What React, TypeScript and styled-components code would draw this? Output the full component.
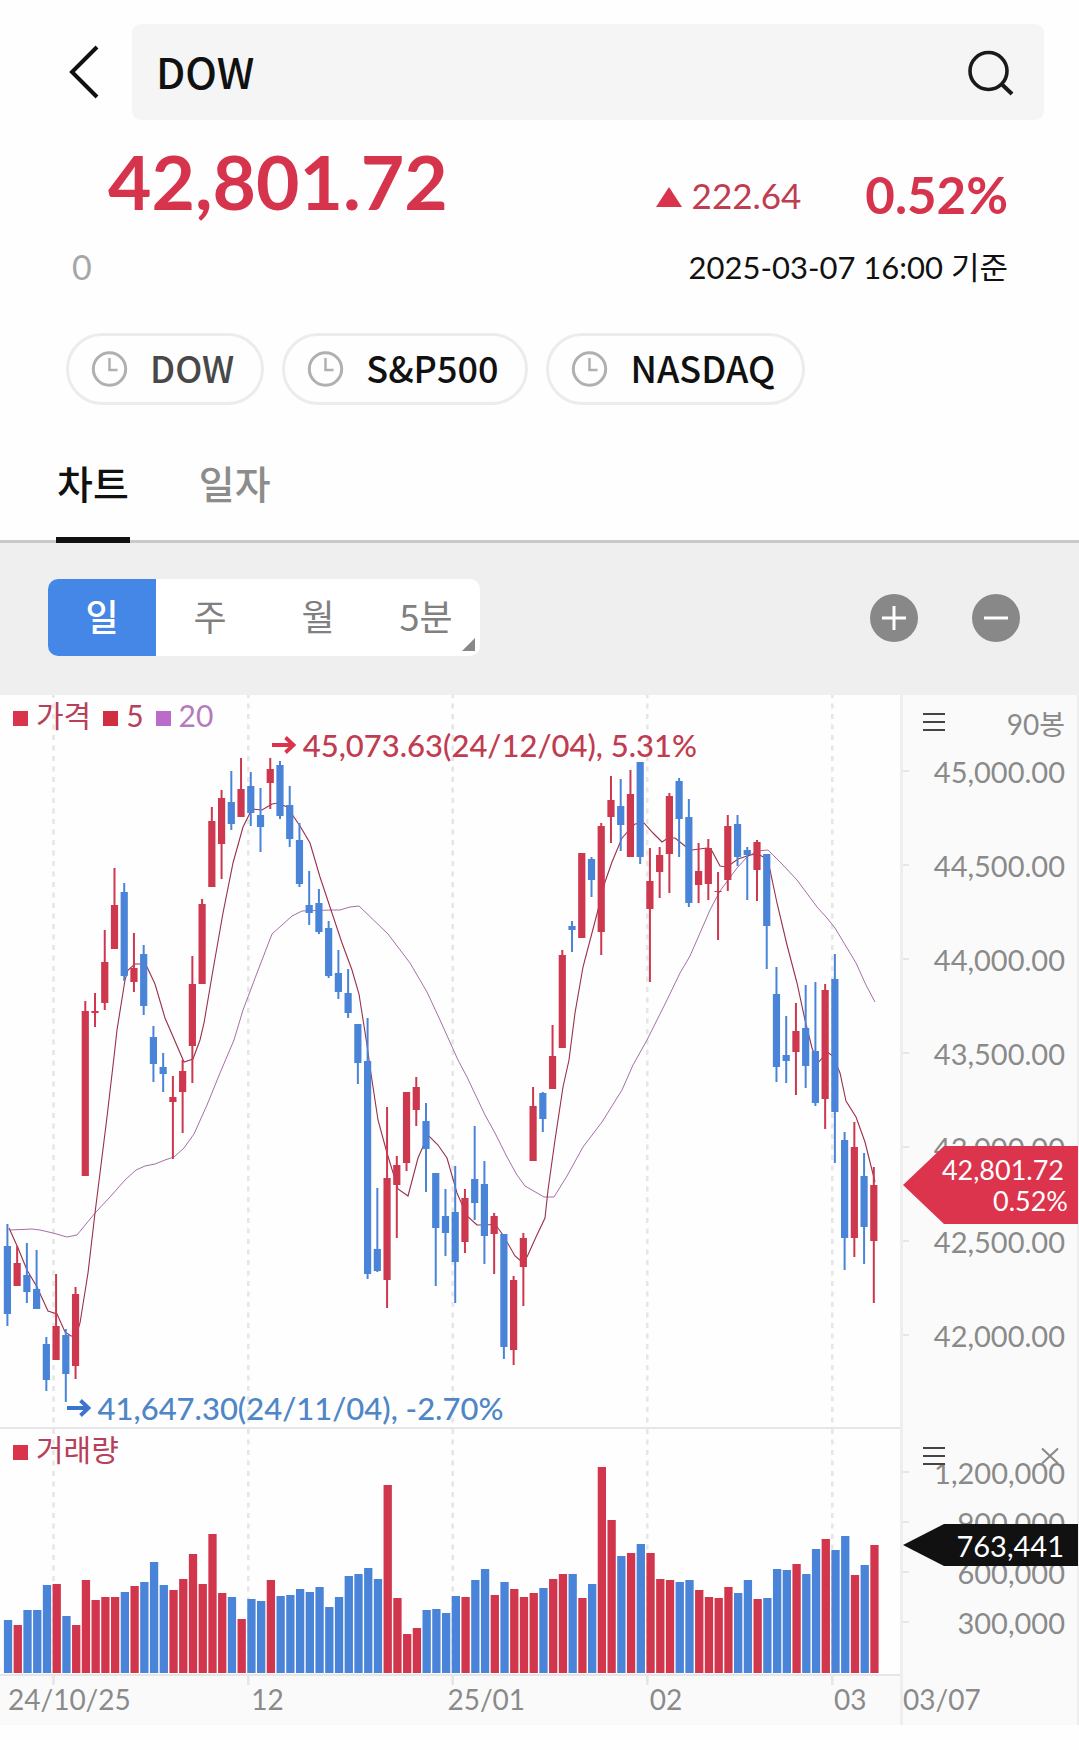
import React, { useState } from "react";
import styled, { createGlobalStyle } from "styled-components";

const RED = "#d6344d";
const BLUE = "#4a84d8";
const NUM = `Lato, "Noto Sans CJK KR", sans-serif`;
const KR = `"Noto Sans CJK KR", "Noto Sans", sans-serif`;

const GlobalStyle = createGlobalStyle`
  *, *::before, *::after { box-sizing: border-box; }
  body { margin: 0; background: #fefefe; color: #111; font-family: ${KR}; }
  button, input { font: inherit; color: inherit; border: 0; padding: 0; margin: 0; background: none; }
  button { cursor: pointer; }
  svg { display: block; }
`;

const Page = styled.main`
  padding-top: 24px;
  padding-bottom: 25px;
`;

const Header = styled.header`
  display: flex;
  align-items: center;
  padding: 0 35px 0 56px;
`;

const BackButton = styled.button`
  width: 56px;
  height: 96px;
  margin-right: 20px;
  display: grid;
  place-items: center;
`;

const SearchBox = styled.label`
  flex: 1;
  display: flex;
  align-items: center;
  height: 96px;
  padding: 0 28px 0 24px;
  border-radius: 9px;
  background: #f5f5f5;
`;

const SearchInput = styled.input`
  flex: 1;
  min-width: 0;
  height: 68px;
  padding-bottom: 4px;
  font-size: 42px;
  font-weight: 500;
  line-height: 64px;
  outline: none;
`;

const SearchButton = styled.button`
  width: 52px;
  height: 52px;
`;

const Quote = styled.section`
  padding: 17px 71px 0 72px;
  font-family: ${NUM};
`;

const QuoteRow = styled.div`
  display: flex;
  justify-content: space-between;
  color: ${RED};
`;

const Price = styled.strong`
  margin-left: 36px;
  font-size: 75px;
  line-height: 88px;
  font-weight: 700;
`;

const Change = styled.div`
  display: flex;
  align-items: center;
  align-self: flex-end;
  line-height: 60px;
`;

const Up = styled.svg`
  margin: 4px 10px 0 0;
`;

const Diff = styled.span`
  font-size: 35px;
  color: #c03c50;
`;

const Rate = styled.strong`
  margin-left: 64px;
  font-size: 51px;
  font-weight: 700;
`;

const StampRow = styled.div`
  display: flex;
  justify-content: space-between;
  margin-top: 22px;
  line-height: 40px;
`;

const Total = styled.span`
  font-size: 34px;
  color: #a6a6a6;
`;

const Stamp = styled.time`
  font-size: 31px;
`;

const Chips = styled.nav`
  display: flex;
  gap: 18px;
  margin-top: 46px;
  padding: 0 66px;
`;

const Chip = styled.button<{ $muted?: boolean }>`
  display: flex;
  align-items: center;
  gap: 22px;
  height: 72px;
  padding: 0 27px 0 22px;
  border: 3px solid #ececec;
  border-radius: 36px;
  font-size: 36px;
  font-weight: 500;
  white-space: nowrap;
  color: ${(p) => (p.$muted ? "#484848" : "#111")};
`;

const ChipName = styled.span`
  padding-bottom: 5px;
`;

const Tabs = styled.div`
  display: flex;
  gap: 68px;
  margin-top: 20px;
  padding: 0 56px;
  box-shadow: inset 0 -3px #c9c9c9;
`;

const Tab = styled.button<{ $on: boolean }>`
  height: 118px;
  font-size: 39px;
  font-weight: 500;
  padding: 0 1px 4px;
  color: ${(p) => (p.$on ? "#111" : "#8c8c8c")};
  box-shadow: ${(p) => (p.$on ? "inset 0 -6px #111" : "none")};
`;

const Toolbar = styled.div`
  display: flex;
  align-items: center;
  justify-content: space-between;
  padding: 36px 59px 39px 48px;
  background: #efefef;
`;

const Segments = styled.div`
  display: flex;
  border-radius: 10px;
  overflow: hidden;
  background: #fff;
`;

const Segment = styled.button<{ $on: boolean }>`
  position: relative;
  width: 108px;
  height: 77px;
  padding-bottom: 5px;
  font-size: 36px;
  font-weight: ${(p) => (p.$on ? 500 : 400)};
  color: ${(p) => (p.$on ? "#fff" : "#808080")};
  background: ${(p) => (p.$on ? "#4587e6" : "transparent")};
`;

const Corner = styled.svg`
  position: absolute;
  right: 5px;
  bottom: 5px;
`;

const ZoomGroup = styled.div`
  display: flex;
  gap: 54px;
`;

const RoundButton = styled.button`
  width: 48px;
  height: 48px;
  border-radius: 50%;
  background: #888;
`;

const Chart = styled.section`
  display: grid;
  grid-template-columns: minmax(0, 1fr) 179px;
  font-family: ${NUM};
  font-size: 28px;
  color: #8a8a8a;
`;

const Pane = styled.div<{ $h: number; $line: string }>`
  position: relative;
  z-index: 1;
  height: ${(p) => p.$h}px;
  border-bottom: ${(p) => p.$line};
`;

const Plot = styled.svg`
  width: 100%;
  height: 100%;
  overflow: visible;
`;

const Legend = styled.div`
  position: absolute;
  left: 13px;
  top: 0;
  display: flex;
  gap: 12px;
  font-size: 30px;
  line-height: 40px;
`;

const Key = styled.span<{ $c: string; $t: string }>`
  display: flex;
  align-items: center;
  gap: 8px;
  color: ${(p) => p.$t};

  &::before {
    content: "";
    width: 15px;
    height: 15px;
    margin-top: 6px;
    background: ${(p) => p.$c};
  }
`;

const Callout = styled.div<{ $x: number; $y: number; $c: string }>`
  position: absolute;
  left: ${(p) => p.$x}%;
  top: ${(p) => p.$y}px;
  display: flex;
  align-items: center;
  gap: 7px;
  line-height: 36px;
  font-size: 31px;
  font-weight: 500;
  white-space: nowrap;
  color: ${(p) => p.$c};
`;

const TimeAxis = styled.div`
  display: grid;
  grid-template-columns: 243fr 196fr 202fr 184fr 66fr;
  height: 49px;
  padding-left: 8px;
  line-height: 46px;
  white-space: nowrap;
  background: #fafafa;
`;

const Axis = styled.div<{ $h: number; $top: number }>`
  position: relative;
  height: ${(p) => p.$h}px;
  padding-top: ${(p) => p.$top}px;
  border-left: 3px solid #eee;
  border-right: 2px solid #eee;
  background: #fafafa;
`;

const AxisTick = styled.div<{ $h: number }>`
  display: flex;
  align-items: center;
  justify-content: space-between;
  height: ${(p) => p.$h}px;
  padding-right: 12px;
  font-size: 29px;

  &::before {
    content: "";
    width: 6px;
    height: 2px;
    background: #e6e6e6;
  }
`;

const AxisHead = styled.div`
  position: absolute;
  left: 20px;
  right: 12px;
  top: 9px;
  display: flex;
  align-items: center;
  justify-content: space-between;
  height: 36px;
  line-height: 36px;
`;

const BarCount = styled.span`
  padding-top: 3px;
`;

const IconButton = styled.button`
  display: block;
`;

const Tag = styled.div<{ $top: number; $h: number; $c: string; $size: number }>`
  position: absolute;
  z-index: 2;
  left: 0;
  right: -1px;
  top: ${(p) => p.$top}px;
  height: ${(p) => p.$h}px;
  display: flex;
  flex-direction: column;
  align-items: flex-end;
  justify-content: center;
  padding-right: 14px;
  font-size: ${(p) => p.$size}px;
  line-height: 31px;
  color: #fff;
  background: ${(p) => p.$c};
  clip-path: polygon(0 50%, 41px 0, 100% 0, 100% 100%, 41px 100%);
`;

const TagRate = styled.span`
  margin-right: -4px;
`;

const AxisFoot = styled.div`
  height: 49px;
  line-height: 46px;
  border-left: 3px solid #eee;
  border-right: 2px solid #eee;
  background: #fafafa;
`;

/* direction, high, body top, body bottom, low, volume bar top */
type Bar = [string, number, number, number, number, number];
const bars: Bar[] = [
  ["d",1224,1246,1314,1326,1620],["u",1246,1263,1286,1286,1625],["d",1243,1275,1292,1303,1610],
  ["d",1250,1289,1309,1309,1610],["d",1337,1344,1380,1391,1585],["u",1274,1326,1360,1360,1584],
  ["d",1329,1335,1374,1402,1616],["u",1287,1294,1366,1379,1625],["u",1001,1011,1176,1176,1580],
  ["u",993,1011,1013,1027,1600],["u",930,962,1003,1010,1597],["u",868,905,949,949,1597],
  ["d",883,892,976,981,1592],["u",933,968,982,992,1586],["d",945,954,1006,1015,1582],
  ["d",1026,1037,1064,1082,1562],["d",1053,1067,1074,1092,1585],["u",1076,1097,1102,1159,1590],
  ["u",1060,1071,1092,1133,1579],["u",956,984,1046,1083,1554],["u",899,904,984,984,1584],
  ["u",807,821,887,887,1534],["u",790,798,844,879,1593],["d",771,802,824,830,1597],
  ["u",758,789,817,817,1619],["d",772,786,813,826,1599],["d",788,815,827,852,1601],
  ["u",758,769,783,809,1580],["d",761,765,816,819,1596],["d",786,805,839,847,1595],
  ["d",823,840,884,887,1589],["d",871,905,913,925,1592],["d",889,903,932,934,1587],
  ["d",921,928,976,978,1607],["d",950,973,992,999,1597],["d",969,993,1013,1018,1576],
  ["d",1024,1024,1063,1084,1574],["d",1018,1061,1274,1279,1568],["d",1188,1249,1271,1272,1579],
  ["u",1107,1178,1280,1308,1485],["u",1156,1165,1185,1238,1598],["u",1092,1092,1163,1171,1634],
  ["u",1077,1087,1110,1126,1628],["d",1103,1121,1149,1192,1610],["d",1173,1173,1228,1286,1609],
  ["d",1189,1216,1233,1256,1613],["d",1166,1212,1262,1303,1596],["u",1189,1198,1242,1253,1597],
  ["d",1126,1179,1203,1220,1580],["d",1161,1184,1236,1264,1569],["u",1213,1216,1234,1274,1595],
  ["d",1234,1234,1347,1359,1582],["u",1276,1280,1350,1365,1589],["u",1233,1238,1267,1306,1597],
  ["u",1087,1106,1161,1161,1593],["d",1092,1093,1119,1132,1588],["u",1025,1056,1089,1089,1579],
  ["u",950,955,1048,1048,1574],["d",921,926,930,952,1574],["u",853,853,938,938,1598],
  ["d",857,859,880,897,1584],["u",823,826,932,955,1467],["u",776,800,817,843,1520],
  ["d",779,806,825,851,1556],["u",770,794,857,857,1553],["d",762,762,857,864,1544],
  ["u",848,881,909,982,1553],["u",847,855,872,898,1579],["u",793,796,854,893,1580],
  ["d",778,781,819,857,1582],["d",799,817,903,907,1580],["u",843,871,885,903,1590],
  ["u",839,848,884,900,1597],["u",872,891,892,940,1598],["u",815,826,880,891,1587],
  ["d",815,824,857,866,1593],["d",847,850,855,900,1580],["u",840,842,870,901,1599],
  ["d",854,854,926,969,1598],["d",967,994,1067,1082,1569],["d",1016,1055,1061,1083,1570],
  ["u",1003,1031,1052,1095,1564],["d",985,1028,1066,1088,1574],["d",982,1051,1103,1106,1549],
  ["u",984,990,1099,1129,1539],["d",954,979,1112,1163,1550],["d",1132,1140,1238,1270,1536],
  ["u",1122,1147,1238,1257,1575],["d",1153,1176,1227,1264,1565],["u",1167,1185,1241,1303,1545],
];

const ma5 =
  "9,1228 18,1248 27,1270 37,1287 48,1311 57,1314 65,1332 71,1336 76,1336 80,1323 88,1273 95,1213 107,1117 114,1057 117,1030 125,980 128,970 135,964 142,964 147,967 155,984 165,1018 184,1062 193,1059 200,1040 204,1023 213,970 223,913 233,863 243,827 250,813 252,809 262,810 272,804 278,803 287,807 300,826 310,843 320,877 331,910 342,943 352,970 359,994 367,1045 370,1067 378,1120 387,1153 398,1189 408,1196 418,1158 425,1142 429,1136 438,1145 447,1158 457,1193 467,1216 477,1225 487,1225 495,1224 503,1235 515,1256 522,1262 527,1257 536,1237 545,1218 548,1190 555,1140 563,1087 569,1060 575,1013 583,967 598,910 605,882 612,862 622,838 635,824 644,823 653,833 662,842 668,838 675,838 685,846 692,850 707,848 712,851 720,866 727,867 738,859 750,855 758,854 765,858 770,870 777,903 787,945 797,983 805,1020 812,1048 818,1063 827,1052 833,1056 840,1073 846,1101 856,1117 865,1142 875,1182";
const ma20 =
  "10,1230 32,1229 40,1230 53,1233 67,1237 77,1235 95,1213 110,1197 125,1180 136,1170 145,1166 155,1164 165,1160 174,1157 184,1148 194,1134 207,1105 220,1073 234,1040 243,1010 257,973 272,934 292,916 302,911 331,910 340,910 350,907 359,906 388,934 410,963 427,992 440,1020 458,1060 467,1077 485,1115 495,1133 507,1157 517,1175 525,1186 544,1197 554,1197 567,1176 583,1147 602,1122 622,1090 633,1065 647,1040 667,1000 680,973 690,956 710,910 720,891 737,868 747,857 757,851 768,850 782,864 797,880 817,907 827,918 835,928 847,948 856,963 866,985 875,1002";

const months = [53.5, 248.3, 452.7, 647.3, 832.3];
const barX = (i: number) => 7.4 + i * 9.735;

const PricePlot = () => (
  <Plot viewBox="0 695 900 732" preserveAspectRatio="none" role="img" aria-label="가격 차트">
    {months.map((x) => (
      <path key={x} d={`M${x} 695V1427`} stroke="#e6e6e6" strokeWidth="2.6" strokeDasharray="5 5.5" strokeDashoffset="2" />
    ))}
    <polyline points={ma20} fill="none" stroke="#a66fa8" strokeWidth="1" />
    <polyline points={ma5} fill="none" stroke="#98304a" strokeWidth="1.1" />
    {bars.map(([dir, high, top, bottom, low], i) => (
      <g key={i} fill={dir === "u" ? "#cd384f" : BLUE}>
        <rect x={barX(i) - 1} y={high} width="2" height={low - high} />
        <rect x={barX(i) - 3.6} y={top} width="7.2" height={bottom - top} />
      </g>
    ))}
  </Plot>
);

const VolumePlot = () => (
  <Plot viewBox="0 1429 900 245" preserveAspectRatio="none" role="img" aria-label="거래량 차트">
    {months.map((x) => (
      <g key={x} stroke="#e6e6e6" strokeWidth="2.6">
        <path d={`M${x} 1429V1673`} strokeDasharray="5 5.5" />
        <path d={`M${x} 1674V1685`} />
      </g>
    ))}
    {bars.map(([dir, , , , , top], i) => (
      <rect key={i} x={barX(i) - 3.5} y={top} width="8.3" height={1673 - top} fill={dir === "u" ? "#d2364d" : BLUE} />
    ))}
  </Plot>
);

const Clock = () => (
  <svg width="37" height="40" viewBox="0 0 37 40" fill="none" stroke="#b0b0b0" aria-hidden="true">
    <circle cx="18.5" cy="20" r="16.2" strokeWidth="3" />
    <path d="M18.5 9v12h8" strokeWidth="2.5" />
  </svg>
);

const Arrow = ({ color }: { color: string }) => (
  <svg width="24" height="18" viewBox="0 0 24 18" fill="none" stroke={color} strokeWidth="3.8" aria-hidden="true">
    <path d="M0 9h21M13.5 1.5L21.5 9l-8 7.5" />
  </svg>
);

const Menu = () => (
  <svg width="22" height="18" viewBox="0 0 22 18" stroke="#444" strokeWidth="2" aria-hidden="true">
    <path d="M0 1h22M0 9h22M0 17h22" />
  </svg>
);

export default function App() {
  const [query, setQuery] = useState("DOW");
  const [tab, setTab] = useState("차트");
  const [period, setPeriod] = useState("일");

  return (
    <>
      <GlobalStyle />
      <Page>
        <Header>
          <BackButton aria-label="뒤로">
            <svg width="32" height="54" viewBox="0 0 32 54" fill="none" stroke="#111" strokeWidth="4">
              <path d="M29 2L4 27l25 25" />
            </svg>
          </BackButton>
          <SearchBox>
            <SearchInput aria-label="지수 검색" value={query} onChange={(e) => setQuery(e.target.value)} />
            <SearchButton aria-label="검색">
              <svg width="52" height="52" viewBox="0 0 52 52" fill="none" stroke="#1a1a1a" strokeWidth="3.6">
                <circle cx="24.5" cy="25" r="18.5" />
                <path d="M37.5 38l10.5 10" strokeWidth="4" />
              </svg>
            </SearchButton>
          </SearchBox>
        </Header>

        <Quote>
          <QuoteRow>
            <Price>42,801.72</Price>
            <Change>
              <Up width="26" height="20" viewBox="0 0 26 20" fill="#d9344c" aria-hidden="true">
                <path d="M13 0l13 20H0z" />
              </Up>
              <Diff>222.64</Diff>
              <Rate>0.52%</Rate>
            </Change>
          </QuoteRow>
          <StampRow>
            <Total>0</Total>
            <Stamp>2025-03-07 16:00 기준</Stamp>
          </StampRow>
        </Quote>

        <Chips aria-label="최근 검색">
          {["DOW", "S&P500", "NASDAQ"].map((name) => (
            <Chip key={name} $muted={name === query} onClick={() => setQuery(name)}>
              <Clock />
              <ChipName>{name}</ChipName>
            </Chip>
          ))}
        </Chips>

        <Tabs role="tablist">
          {["차트", "일자"].map((name) => (
            <Tab key={name} role="tab" aria-selected={tab === name} $on={tab === name} onClick={() => setTab(name)}>
              {name}
            </Tab>
          ))}
        </Tabs>

        <Toolbar>
          <Segments>
            {["일", "주", "월", "5분"].map((name) => (
              <Segment key={name} $on={period === name} aria-pressed={period === name} onClick={() => setPeriod(name)}>
                {name}
                {name === "5분" && (
                  <Corner width="13" height="13" viewBox="0 0 13 13" fill="#888" aria-hidden="true">
                    <path d="M13 0v13H0z" />
                  </Corner>
                )}
              </Segment>
            ))}
          </Segments>
          <ZoomGroup>
            <RoundButton aria-label="확대">
              <svg width="48" height="48" viewBox="0 0 48 48" stroke="#fff" strokeWidth="3">
                <path d="M12 24h24M24 12v24" />
              </svg>
            </RoundButton>
            <RoundButton aria-label="축소">
              <svg width="48" height="48" viewBox="0 0 48 48" stroke="#fff" strokeWidth="3">
                <path d="M12 24h24" />
              </svg>
            </RoundButton>
          </ZoomGroup>
        </Toolbar>

        <Chart>
          <Pane $h={734} $line="2px solid #e6e6e6">
            <PricePlot />
            <Legend>
              <Key $c="#d9344c" $t="#b8405a">가격</Key>
              <Key $c="#cf2f40" $t="#b8405a">5</Key>
              <Key $c="#bb6bc9" $t="#b37bbb">20</Key>
            </Legend>
            <Callout $x={30.2} $y={32} $c="#c03c50">
              <Arrow color="#d9344c" />
              45,073.63(24/12/04), 5.31%
            </Callout>
            <Callout $x={7.4} $y={695} $c="#4f86c6">
              <Arrow color="#3a74d0" />
              41,647.30(24/11/04), -2.70%
            </Callout>
          </Pane>
          <Axis $h={734} $top={29}>
            <AxisHead>
              <IconButton aria-label="가격 메뉴"><Menu /></IconButton>
              <BarCount>90봉</BarCount>
            </AxisHead>
            {["45,000.00", "44,500.00", "44,000.00", "43,500.00", "43,000.00", "42,500.00", "42,000.00"].map((v) => (
              <AxisTick key={v} $h={94}>{v}</AxisTick>
            ))}
            <Tag $top={451} $h={78} $c="#dc344d" $size={27}>
              <span>42,801.72</span>
              <TagRate>0.52%</TagRate>
            </Tag>
          </Axis>

          <Pane $h={247} $line="2px solid #e6e6e6">
            <VolumePlot />
            <Legend>
              <Key $c="#d9344c" $t="#b8405a">거래량</Key>
            </Legend>
          </Pane>
          <Axis $h={247} $top={18}>
            <AxisHead>
              <IconButton aria-label="거래량 메뉴"><Menu /></IconButton>
              <IconButton aria-label="거래량 닫기">
                <svg width="28" height="18" viewBox="0 0 28 18" stroke="#888" strokeWidth="2">
                  <path d="M5 1.5l16 15M21 1.5l-16 15" />
                </svg>
              </IconButton>
            </AxisHead>
            {["1,200,000", "900,000", "600,000", "300,000"].map((v) => (
              <AxisTick key={v} $h={50}>{v}</AxisTick>
            ))}
            <Tag $top={95} $h={42} $c="#111" $size={29}>
              <span>763,441</span>
            </Tag>
          </Axis>

          <TimeAxis>
            {["24/10/25", "12", "25/01", "02", "03"].map((t) => (
              <span key={t}>{t}</span>
            ))}
          </TimeAxis>
          <AxisFoot>03/07</AxisFoot>
        </Chart>
      </Page>
    </>
  );
}
